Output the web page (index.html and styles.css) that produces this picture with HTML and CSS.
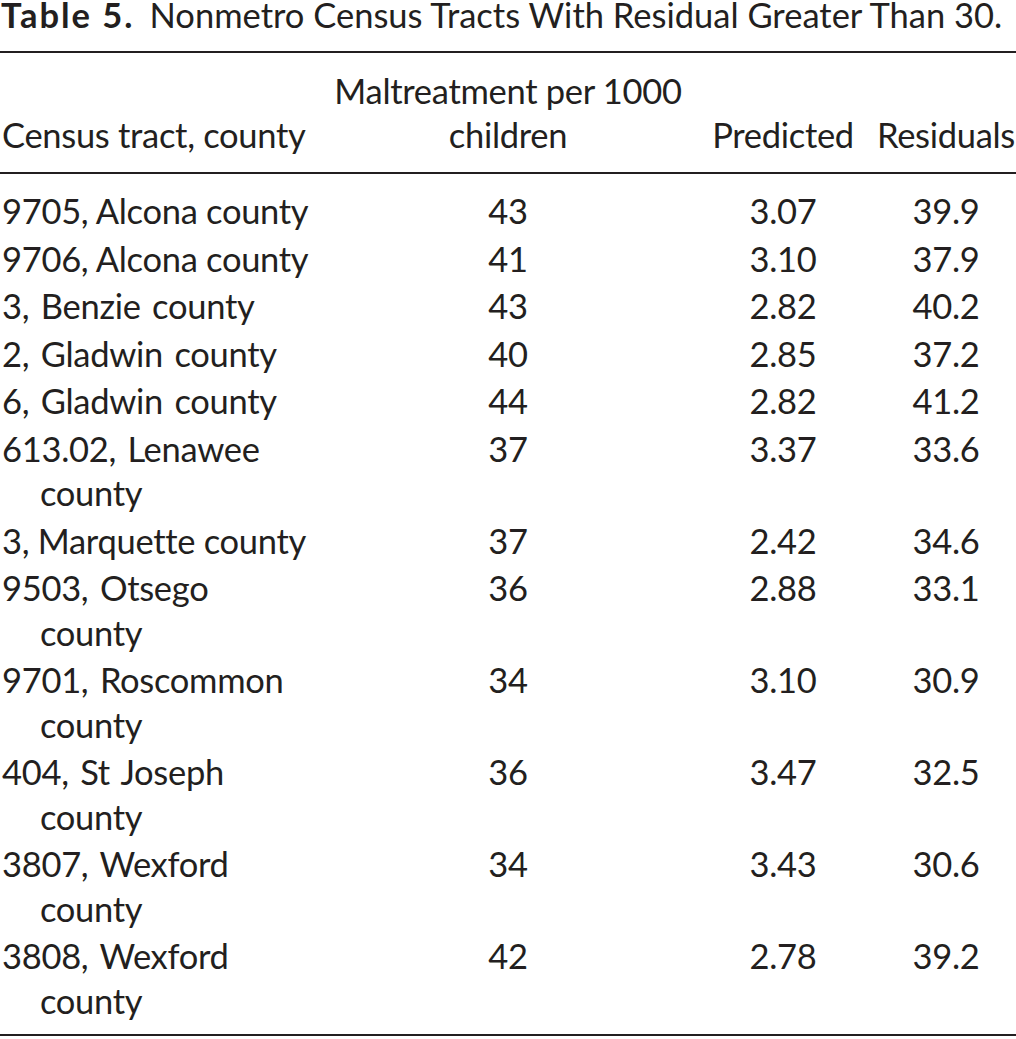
FILE: index.html
```html
<!DOCTYPE html>
<html>
<head>
<meta charset="utf-8">
<link rel="stylesheet" href="styles.css">
</head>
<body>
<div class="title"><b class="label">Table 5.</b><span class="caption">Nonmetro Census Tracts With Residual Greater Than 30.</span></div>
<table class="tbl">
<colgroup><col class="c1"><col class="c2"><col class="c3"><col class="c4"></colgroup>
<thead>
<tr><th class="left">Census tract, county</th><th>Maltreatment per 1000<br>children</th><th>Predicted</th><th class="res">Residuals</th></tr>
</thead>
<tbody>
<tr><td class="left">9705, Alcona county</td><td>43</td><td>3.07</td><td class="res">39.9</td></tr>
<tr><td class="left">9706, Alcona county</td><td>41</td><td>3.10</td><td class="res">37.9</td></tr>
<tr><td class="left wide">3, Benzie county</td><td>43</td><td>2.82</td><td class="res">40.2</td></tr>
<tr><td class="left wide">2, Gladwin county</td><td>40</td><td>2.85</td><td class="res">37.2</td></tr>
<tr><td class="left wide">6, Gladwin county</td><td>44</td><td>2.82</td><td class="res">41.2</td></tr>
<tr><td class="left wide">613.02, Lenawee<br><span class="ind">county</span></td><td>37</td><td>3.37</td><td class="res">33.6</td></tr>
<tr><td class="left">3, Marquette county</td><td>37</td><td>2.42</td><td class="res">34.6</td></tr>
<tr><td class="left wide">9503, Otsego<br><span class="ind">county</span></td><td>36</td><td>2.88</td><td class="res">33.1</td></tr>
<tr><td class="left wide">9701, Roscommon<br><span class="ind">county</span></td><td>34</td><td>3.10</td><td class="res">30.9</td></tr>
<tr><td class="left wide">404, St Joseph<br><span class="ind">county</span></td><td>36</td><td>3.47</td><td class="res">32.5</td></tr>
<tr><td class="left wide">3807, Wexford<br><span class="ind">county</span></td><td>34</td><td>3.43</td><td class="res">30.6</td></tr>
<tr><td class="left wide">3808, Wexford<br><span class="ind">county</span></td><td>42</td><td>2.78</td><td class="res">39.2</td></tr>
</tbody>
</table>
</body>
</html>
```
FILE: styles.css
```css
html, body {
  margin: 0;
  padding: 0;
  background: #ffffff;
}
body {
  width: 1016px;
  color: #231f20;
  font-family: Lato, "Open Sans", sans-serif;
  overflow: hidden;
}
.title {
  display: flex;
  align-items: baseline;
  height: 51px;
  font-size: 34.5px;
  line-height: 30px;
  white-space: nowrap;
}
.title .label {
  font-weight: 700;
  letter-spacing: 2px;
  padding-left: 1px;
}
.title .caption {
  margin-left: 15px;
}
.tbl {
  width: 1016px;
  border-collapse: collapse;
  table-layout: fixed;
  border-top: 2px solid #231f20;
  border-bottom: 2px solid #231f20;
  font-size: 34.5px;
  letter-spacing: -0.3px;
}
.c1 { width: 320px; }
.c2 { width: 376px; }
.c3 { width: 174px; }
.c4 { width: 146px; }
.tbl th {
  font-weight: 400;
  line-height: 44px;
  vertical-align: bottom;
  text-align: center;
  padding: 15.5px 0 15.5px 0;
  white-space: nowrap;
}
.tbl thead tr {
  border-bottom: 2.5px solid #231f20;
}
.tbl td {
  line-height: 44.5px;
  padding: 1.5px 0;
  vertical-align: top;
  text-align: center;
  white-space: nowrap;
}
.tbl tbody tr:first-child td {
  padding-top: 15px;
}
.tbl tbody tr:last-child td {
  padding-bottom: 10.5px;
}
.tbl .left {
  text-align: left;
  padding-left: 2px;
}
.tbl .res {
  padding-left: 6px;
}
.ind {
  padding-left: 38px;
}
.wide {
  word-spacing: 3px;
}
```
